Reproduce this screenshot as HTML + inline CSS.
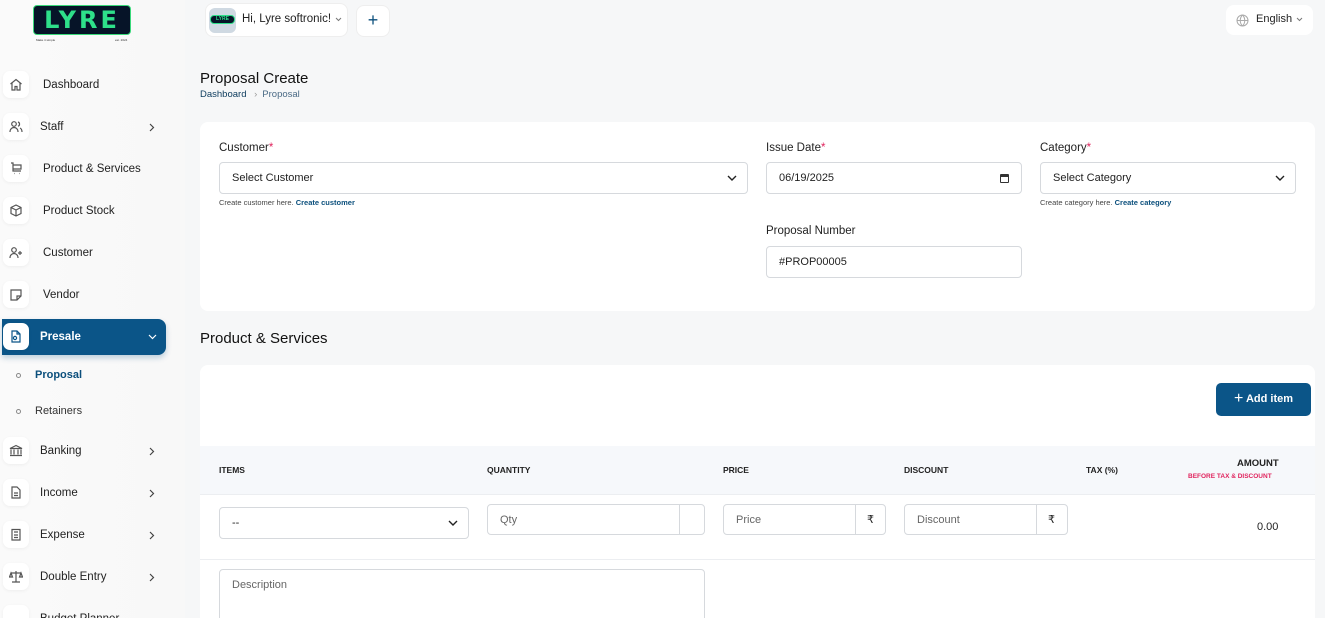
<!DOCTYPE html>
<html><head><meta charset="utf-8"><style>
*{box-sizing:border-box;margin:0;padding:0}
html,body{width:1325px;height:618px;overflow:hidden}
body{background:#f6f7f8;font-family:"Liberation Sans",sans-serif;color:#222;font-size:11.5px;position:relative}
.a{position:absolute}
.side{position:absolute;left:0;top:0;width:185px;height:618px;background:linear-gradient(90deg,#fafafa,#f8f8f8)}
.ni{position:absolute;left:0;width:166px;height:36px}
.ib{position:absolute;left:3px;top:4px;width:26px;height:27px;background:#fff;border-radius:7px;box-shadow:0 1px 3px rgba(0,0,0,.05)}
.ib svg{position:absolute;left:6px;top:7px}
.nt{position:absolute;left:43px;top:12px;font-size:11.5px;color:#222}
.ch{position:absolute;left:149px;top:14px}
.card{position:absolute;background:#fff;border-radius:8px}
.lbl{position:absolute;font-size:11.5px;color:#222}
.lbl i{color:#e0245e;font-style:normal}
.inp{position:absolute;border:1px solid #d6d9dd;border-radius:4px;height:32px;background:#fff;font-size:11px;color:#222;padding:9px 12px}
.hint{position:absolute;font-size:7.5px;color:#444}
.hint b{color:#0b4f7c;font-weight:bold}
.th{position:absolute;font-size:8.5px;font-weight:bold;color:#222}
.ph{color:#666}
.dd{position:absolute;right:10px;top:12px}
</style></head><body>
<div class="side">
 <div class="a" style="left:33px;top:5px;width:98px;height:30px;background:#061428;border:1px solid #39d97a;border-radius:4px;color:#2ee08a;font-weight:bold;font-size:24px;text-align:center;line-height:28px;letter-spacing:3px;font-family:'DejaVu Sans',sans-serif">LYRE</div>
 <div class="a" style="left:36px;top:38px;font-size:3px;color:#333">Make it simple</div>
 <div class="a" style="left:115px;top:38px;font-size:3px;color:#333">est. 2024</div>

 <div class="ni" style="top:67px"><div class="ib"><svg width="14" height="13" viewBox="0 0 14 13" fill="none" stroke="#555" stroke-width="1.2"><path d="M1.5 6L7 1.5L12.5 6M3 5v7h3V8.5h2V12h3V5"/></svg></div><div class="nt">Dashboard</div></div>
 <div class="ni" style="top:109px"><div class="ib"><svg width="14" height="13" viewBox="0 0 14 13" fill="none" stroke="#555" stroke-width="1.2"><circle cx="5" cy="4" r="2.3"/><path d="M1 12c0-3 2-4.5 4-4.5s4 1.5 4 4.5M9 2a2.2 2.2 0 010 4.2M11 8c1.2.6 2 1.8 2 4"/></svg></div><div class="nt" style="left:40px">Staff</div><svg class="ch" width="6" height="9" viewBox="0 0 6 9" fill="none" stroke="#444" stroke-width="1.2"><path d="M1 1l3.5 3.5L1 8"/></svg></div>
 <div class="ni" style="top:151px"><div class="ib"><svg width="14" height="13" viewBox="0 0 14 13" fill="none" stroke="#555" stroke-width="1.2"><path d="M2 1h2v8h8M4 3h8v4H4M5 11.5h.5M10 11.5h.5"/></svg></div><div class="nt">Product &amp; Services</div></div>
 <div class="ni" style="top:193px"><div class="ib"><svg width="14" height="13" viewBox="0 0 14 13" fill="none" stroke="#555" stroke-width="1.2"><path d="M7 1l5 2.5v6L7 12 2 9.5v-6zM2 3.5L7 6l5-2.5M7 6v6"/></svg></div><div class="nt">Product Stock</div></div>
 <div class="ni" style="top:235px"><div class="ib"><svg width="14" height="13" viewBox="0 0 14 13" fill="none" stroke="#555" stroke-width="1.2"><circle cx="5" cy="4" r="2.3"/><path d="M1 12c0-3 2-4.5 4-4.5s4 1.5 4 4.5M11 5v4M9 7h4"/></svg></div><div class="nt">Customer</div></div>
 <div class="ni" style="top:277px"><div class="ib"><svg width="14" height="13" viewBox="0 0 14 13" fill="none" stroke="#555" stroke-width="1.2"><path d="M2 2h10v6l-4 4H2zM8 12V8h4"/></svg></div><div class="nt">Vendor</div></div>
 <div class="ni" style="top:319px;left:2px;width:164px;background:#0b5588;border-radius:0 8px 8px 0;height:36px;box-shadow:0 3px 6px rgba(11,85,136,.25)"><div class="ib" style="left:1px"><svg width="14" height="13" viewBox="0 0 14 13" fill="none" stroke="#0b5588" stroke-width="1.2"><path d="M3 1h5l3 3v8H3zM8 1v3h3"/><circle cx="6" cy="8" r="1.6"/></svg></div><div class="nt" style="left:38px;color:#fff;font-weight:bold">Presale</div><svg class="ch" style="left:146px;top:15px" width="9" height="6" viewBox="0 0 9 6" fill="none" stroke="#fff" stroke-width="1.2"><path d="M1 1l3.5 3.5L8 1"/></svg></div>
 <div class="a" style="left:16px;top:373px;width:5px;height:5px;border:1px solid #888;border-radius:50%"></div>
 <div class="a" style="left:35px;top:369px;font-weight:bold;color:#0b4f7c;font-size:11px">Proposal</div>
 <div class="a" style="left:16px;top:409px;width:5px;height:5px;border:1px solid #888;border-radius:50%"></div>
 <div class="a" style="left:35px;top:405px;font-size:11px;color:#333">Retainers</div>
 <div class="ni" style="top:433px"><div class="ib"><svg width="14" height="13" viewBox="0 0 14 13" fill="none" stroke="#555" stroke-width="1.2"><path d="M1 4.5L7 1.5l6 3zM2 5.5v5M5 5.5v5M9 5.5v5M12 5.5v5M1 11.5h12"/></svg></div><div class="nt" style="left:40px">Banking</div><svg class="ch" width="6" height="9" viewBox="0 0 6 9" fill="none" stroke="#444" stroke-width="1.2"><path d="M1 1l3.5 3.5L1 8"/></svg></div>
 <div class="ni" style="top:475px"><div class="ib"><svg width="14" height="13" viewBox="0 0 14 13" fill="none" stroke="#555" stroke-width="1.2"><path d="M3 1h5l3 3v8H3zM5 7h4M5 9.5h4"/></svg></div><div class="nt" style="left:40px">Income</div><svg class="ch" width="6" height="9" viewBox="0 0 6 9" fill="none" stroke="#444" stroke-width="1.2"><path d="M1 1l3.5 3.5L1 8"/></svg></div>
 <div class="ni" style="top:517px"><div class="ib"><svg width="14" height="13" viewBox="0 0 14 13" fill="none" stroke="#555" stroke-width="1.2"><path d="M3 1.5h8v10.5H3zM5 4h4M5 7h4M5 9.5h4"/></svg></div><div class="nt" style="left:40px">Expense</div><svg class="ch" width="6" height="9" viewBox="0 0 6 9" fill="none" stroke="#444" stroke-width="1.2"><path d="M1 1l3.5 3.5L1 8"/></svg></div>
 <div class="ni" style="top:559px"><div class="ib"><svg width="14" height="13" viewBox="0 0 14 13" fill="none" stroke="#555" stroke-width="1.2"><path d="M7 1v11M3 12h8M2 3h10M2 3l-1.5 4h3zM12 3l-1.5 4h3z"/></svg></div><div class="nt" style="left:40px">Double Entry</div><svg class="ch" width="6" height="9" viewBox="0 0 6 9" fill="none" stroke="#444" stroke-width="1.2"><path d="M1 1l3.5 3.5L1 8"/></svg></div>
 <div class="ni" style="top:601px"><div class="ib"></div><div class="nt" style="left:40px">Budget Planner</div></div>
</div>

<!-- header -->
<div class="a" style="left:205px;top:3px;width:143px;height:34px;background:#fff;border:1px solid #eee;border-radius:8px"></div>
<div class="a" style="left:209px;top:8px;width:27px;height:25px;background:#cfd9e2;border-radius:6px"></div>
<div class="a" style="left:210px;top:15px;width:25px;height:9px;background:#061428;border-radius:4px;border:1px solid #2ee08a;color:#2ee08a;font-size:5px;font-weight:bold;text-align:center;line-height:7px">LYRE</div>
<div class="a" style="left:242px;top:13px;font-size:11.5px;color:#222">Hi, Lyre softronic!</div>
<svg class="a" style="left:335px;top:17px" width="7" height="5" viewBox="0 0 7 5" fill="none" stroke="#777" stroke-width="1"><path d="M1 1l2.5 2.5L6 1"/></svg>
<div class="a" style="left:356px;top:5px;width:34px;height:32px;background:#fff;border:1px solid #eee;border-radius:8px;text-align:center;line-height:29px;font-size:18px;color:#0b4f7c">+</div>
<div class="a" style="left:1226px;top:5px;width:87px;height:30px;background:#fff;border-radius:8px"></div>
<svg class="a" style="left:1236px;top:14px" width="13" height="13" viewBox="0 0 13 13" fill="none" stroke="#aaa" stroke-width="1"><circle cx="6.5" cy="6.5" r="5.5"/><path d="M1 6.5h11M6.5 1c-3 3-3 8 0 11M6.5 1c3 3 3 8 0 11"/></svg>
<div class="a" style="left:1256px;top:13px;font-size:11px;color:#222">English</div>
<svg class="a" style="left:1296px;top:17px" width="7" height="5" viewBox="0 0 7 5" fill="none" stroke="#777" stroke-width="1"><path d="M1 1l2.5 2.5L6 1"/></svg>

<div class="a" style="left:200px;top:70px;font-size:15px;color:#111">Proposal Create</div>
<div class="a" style="left:200px;top:89px;font-size:9.5px;color:#0b3a5c">Dashboard <span style="color:#999;margin:0 5px">›</span><span style="color:#4a6a85">Proposal</span></div>

<div class="card" style="left:200px;top:122px;width:1115px;height:189px">
 <div class="lbl" style="left:19px;top:20px">Customer<i>*</i></div>
 <div class="inp" style="left:19px;top:40px;width:529px">Select Customer<svg class="dd" width="10" height="7" viewBox="0 0 10 7" fill="none" stroke="#222" stroke-width="1.4"><path d="M1 1l4 4 4-4"/></svg></div>
 <div class="hint" style="left:19px;top:76px">Create customer here. <b>Create customer</b></div>
 <div class="lbl" style="left:566px;top:20px">Issue Date<i>*</i></div>
 <div class="inp" style="left:566px;top:40px;width:256px">06/19/2025<span style="position:absolute;right:12px;top:11px;width:9px;height:9px;border:1.3px solid #333;border-top-width:3px;border-radius:1px"></span></div>
 <div class="lbl" style="left:840px;top:20px">Category<i>*</i></div>
 <div class="inp" style="left:840px;top:40px;width:256px">Select Category<svg class="dd" width="10" height="7" viewBox="0 0 10 7" fill="none" stroke="#222" stroke-width="1.4"><path d="M1 1l4 4 4-4"/></svg></div>
 <div class="hint" style="left:840px;top:76px">Create category here. <b>Create category</b></div>
 <div class="lbl" style="left:566px;top:103px">Proposal Number</div>
 <div class="inp" style="left:566px;top:124px;width:256px">#PROP00005</div>
</div>

<div class="a" style="left:200px;top:330px;font-size:15px;color:#111">Product &amp; Services</div>

<div class="card" style="left:200px;top:365px;width:1115px;height:253px;border-radius:8px 8px 0 0;overflow:hidden">
 <div class="a" style="left:1016px;top:18px;width:95px;height:33px;background:#0b5588;border-radius:5px;color:#fff;font-size:11px;font-weight:bold;line-height:32px;text-align:center"><span style="font-size:16px;font-weight:normal;vertical-align:-1px">+</span> Add item</div>
 <div class="a" style="left:0;top:81px;width:1115px;height:49px;background:#f6f8fb;border-bottom:1px solid #eceef1"></div>
 <div class="th" style="left:19px;top:100px">ITEMS</div>
 <div class="th" style="left:287px;top:100px">QUANTITY</div>
 <div class="th" style="left:523px;top:100px">PRICE</div>
 <div class="th" style="left:704px;top:100px">DISCOUNT</div>
 <div class="th" style="left:886px;top:100px">TAX (%)</div>
 <div class="th" style="left:1037px;top:93px;font-size:9.5px">AMOUNT</div>
 <div class="th" style="left:988px;top:108px;font-size:6.5px;color:#e0245e">BEFORE TAX &amp; DISCOUNT</div>
 <div class="inp" style="left:19px;top:142px;width:250px">--<svg class="dd" width="10" height="7" viewBox="0 0 10 7" fill="none" stroke="#222" stroke-width="1.4"><path d="M1 1l4 4 4-4"/></svg></div>
 <div class="inp ph" style="left:287px;top:139px;width:218px;height:31px">Qty<span style="position:absolute;left:191px;top:0;height:29px;border-left:1px solid #d6d9dd"></span></div>
 <div class="inp ph" style="left:523px;top:139px;width:163px;height:31px">Price<span style="position:absolute;left:131px;top:0;height:29px;border-left:1px solid #d6d9dd;padding:8px 11px;color:#222">₹</span></div>
 <div class="inp ph" style="left:704px;top:139px;width:164px;height:31px">Discount<span style="position:absolute;left:131px;top:0;height:29px;border-left:1px solid #d6d9dd;padding:8px 11px;color:#222">₹</span></div>
 <div class="a" style="left:1057px;top:156px;font-size:11px;color:#222">0.00</div>
 <div class="a" style="left:0;top:194px;width:1115px;border-top:1px solid #eceef1"></div>
 <div class="inp ph" style="left:19px;top:204px;width:486px;height:60px">Description</div>
</div>
</body></html>
